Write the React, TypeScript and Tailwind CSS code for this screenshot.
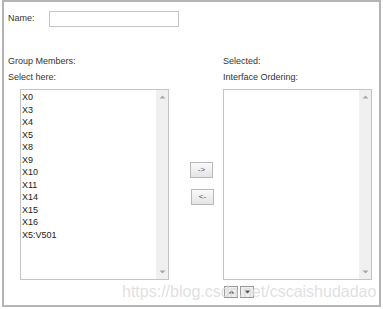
import React from "react";

const items = ["X0", "X3", "X4", "X5", "X8", "X9", "X10", "X11", "X14", "X15", "X16", "X5:V501"];

const Arrow = ({ up, color = "#a8a8a8" }: { up?: boolean; color?: string }) => (
  <svg width="7" height="4" viewBox="0 0 7 4">
    <path d={up ? "M0.5 3.5h6L3.5 0.5z" : "M0.5 0.5h6L3.5 3.5z"} fill={color} />
  </svg>
);

function ListBox({ values }: { values: string[] }) {
  return (
    <div className="flex w-[149px] h-[191px] border border-[#c4c4c4] bg-white">
      <div className="flex-1 pl-[1px] pt-[1px] text-[9px] leading-[12.5px] text-[#1a1a1a]">
        {values.map((v) => (
          <div key={v}>{v}</div>
        ))}
      </div>
      <div className="flex w-[12px] flex-col items-center justify-between bg-[#f0f0f0] py-[5px]">
        <Arrow up />
        <Arrow />
      </div>
    </div>
  );
}

const btn =
  "flex items-center justify-center border border-[#b8b8b8] bg-gradient-to-b from-[#fafafa] to-[#e4e4e4] text-[8px] leading-none text-[#5a3a7a]";

export default function App() {
  return (
    <div className="relative w-[383px] h-[309px] bg-white font-['Liberation_Sans',Arial,sans-serif]">
      <div className="ml-[2px] w-[379px] h-[307px] border-2 border-[#b4b4b4] px-[4px] text-[9px] text-[#333]">
        <div className="flex items-center pt-[9px]">
          <span className="w-[41px]">Name:</span>
          <input className="w-[130px] h-[16px] border border-[#c4c4c4] bg-white outline-none" />
        </div>

        <div className="mt-[26px] flex">
          <div className="flex w-[215px] flex-col">
            <div className="leading-[16px]">Group Members:</div>
            <div className="leading-[16px]">Select here:</div>
            <div className="mt-[4px] flex">
              <div className="ml-[12px]">
                <ListBox values={items} />
              </div>
              <div className="ml-[21px] flex flex-col pt-[73px]">
                <button className={`${btn} w-[23px] h-[16px]`}>-&gt;</button>
                <button className={`${btn} ml-[1px] mt-[11px] w-[23px] h-[16px]`}>&lt;-</button>
              </div>
            </div>
          </div>
          <div className="flex flex-col">
            <div className="leading-[16px]">Selected:</div>
            <div className="leading-[16px]">Interface Ordering:</div>
            <div className="mt-[4px]">
              <ListBox values={[]} />
            </div>
            <div className="mt-[6px] flex gap-[2px] pl-[1px]">
              <button className="flex w-[14px] h-[12px] items-center justify-center border border-[#999] bg-[#eeeeee]">
                <Arrow up color="#555" />
              </button>
              <button className="flex w-[14px] h-[12px] items-center justify-center border border-[#999] bg-[#eeeeee]">
                <Arrow color="#555" />
              </button>
            </div>
          </div>
        </div>
      </div>
      <div className="pointer-events-none absolute left-[122px] top-[282px] text-[16px] leading-[20px] text-[#d8d8d8]/80">
        https://blog.csdn.net/cscaishudadao
      </div>
    </div>
  );
}
